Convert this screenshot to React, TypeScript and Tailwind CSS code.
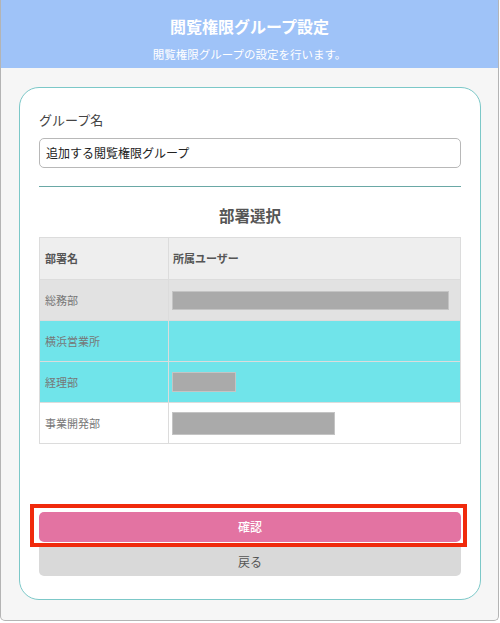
const rows = [
  { name: '総務部', bg: 'bg-[#e2e2e2]', bar: 'w-[277px] h-[19px]' },
  { name: '横浜営業所', bg: 'bg-[#70e4ea]', bar: '' },
  { name: '経理部', bg: 'bg-[#70e4ea]', bar: 'w-[64px] h-[20px]' },
  { name: '事業開発部', bg: 'bg-white', bar: 'w-[163px] h-[23px]' },
];

export default function App() {
  return (
    <div className="w-[500px] h-[623px] bg-white font-['Noto_Sans_CJK_JP',sans-serif]">
      <div className="w-[499px] h-[621px] border border-t-0 border-[#b4b4b4] rounded-b-[5px] bg-[#f6f6f6] overflow-hidden flex flex-col">
        {/* header */}
        <div className="h-[68px] bg-[#9fc3f8] flex flex-col items-center text-white">
          <h1 className="mt-[14px] text-[16px] leading-[24px] font-bold">閲覧権限グループ設定</h1>
          <p className="mt-[8px] text-[11.5px] leading-[16px]">閲覧権限グループの設定を行います。</p>
        </div>

        {/* card */}
        <div className="ml-[18px] mt-[19px] w-[462px] h-[513px] bg-white border border-[#7cc8c8] rounded-[20px] px-[19px] flex flex-col">
          <label className="mt-[22px] text-[13px] leading-[20px] text-[#444]">グループ名</label>
          <div className="mt-[8px] h-[30px] border border-[#b8b8b8] rounded-[5px] flex items-center px-[6px] text-[12px] text-[#222]">
            追加する閲覧権限グループ
          </div>
          <div className="mt-[18px] h-px bg-[#6aa8a6]" />
          <h2 className="mt-[17px] text-center text-[15.5px] leading-[22px] font-bold text-[#555]">部署選択</h2>

          <table className="mt-[11px] w-full border-collapse border border-[#dcdcdc] text-[11px]">
            <thead>
              <tr className="bg-[#eeeeee] h-[42px]">
                <th className="w-[129px] border border-[#dcdcdc] text-left font-bold text-[#555] px-[5px]">部署名</th>
                <th className="border border-[#dcdcdc] text-left font-bold text-[#555] px-[4px]">所属ユーザー</th>
              </tr>
            </thead>
            <tbody>
              {rows.map((r) => (
                <tr key={r.name} className={`${r.bg} h-[41px]`}>
                  <td className="border border-[#dcdcdc] text-[#777] px-[5px]">{r.name}</td>
                  <td className="border border-[#dcdcdc] px-[3px]">
                    {r.bar && <div className={`${r.bar} bg-[#aaaaaa] border border-[#c4c4c4]`} />}
                  </td>
                </tr>
              ))}
            </tbody>
          </table>

          {/* buttons */}
          <div className="mt-auto mb-[23px] flex flex-col">
            <div className="relative">
              <button className="w-full h-[30px] bg-[#e373a2] rounded-[5px] text-white text-[12px] font-medium">
                確認
              </button>
              <div className="absolute left-[-9px] right-[-6px] top-[-8px] bottom-[-5px] border-4 border-[#f02a0c]" />
            </div>
            <button className="mt-[5px] w-full h-[29px] bg-[#d9d9d9] rounded-b-[5px] text-[#555] text-[12px]">
              戻る
            </button>
          </div>
        </div>
      </div>
    </div>
  );
}
